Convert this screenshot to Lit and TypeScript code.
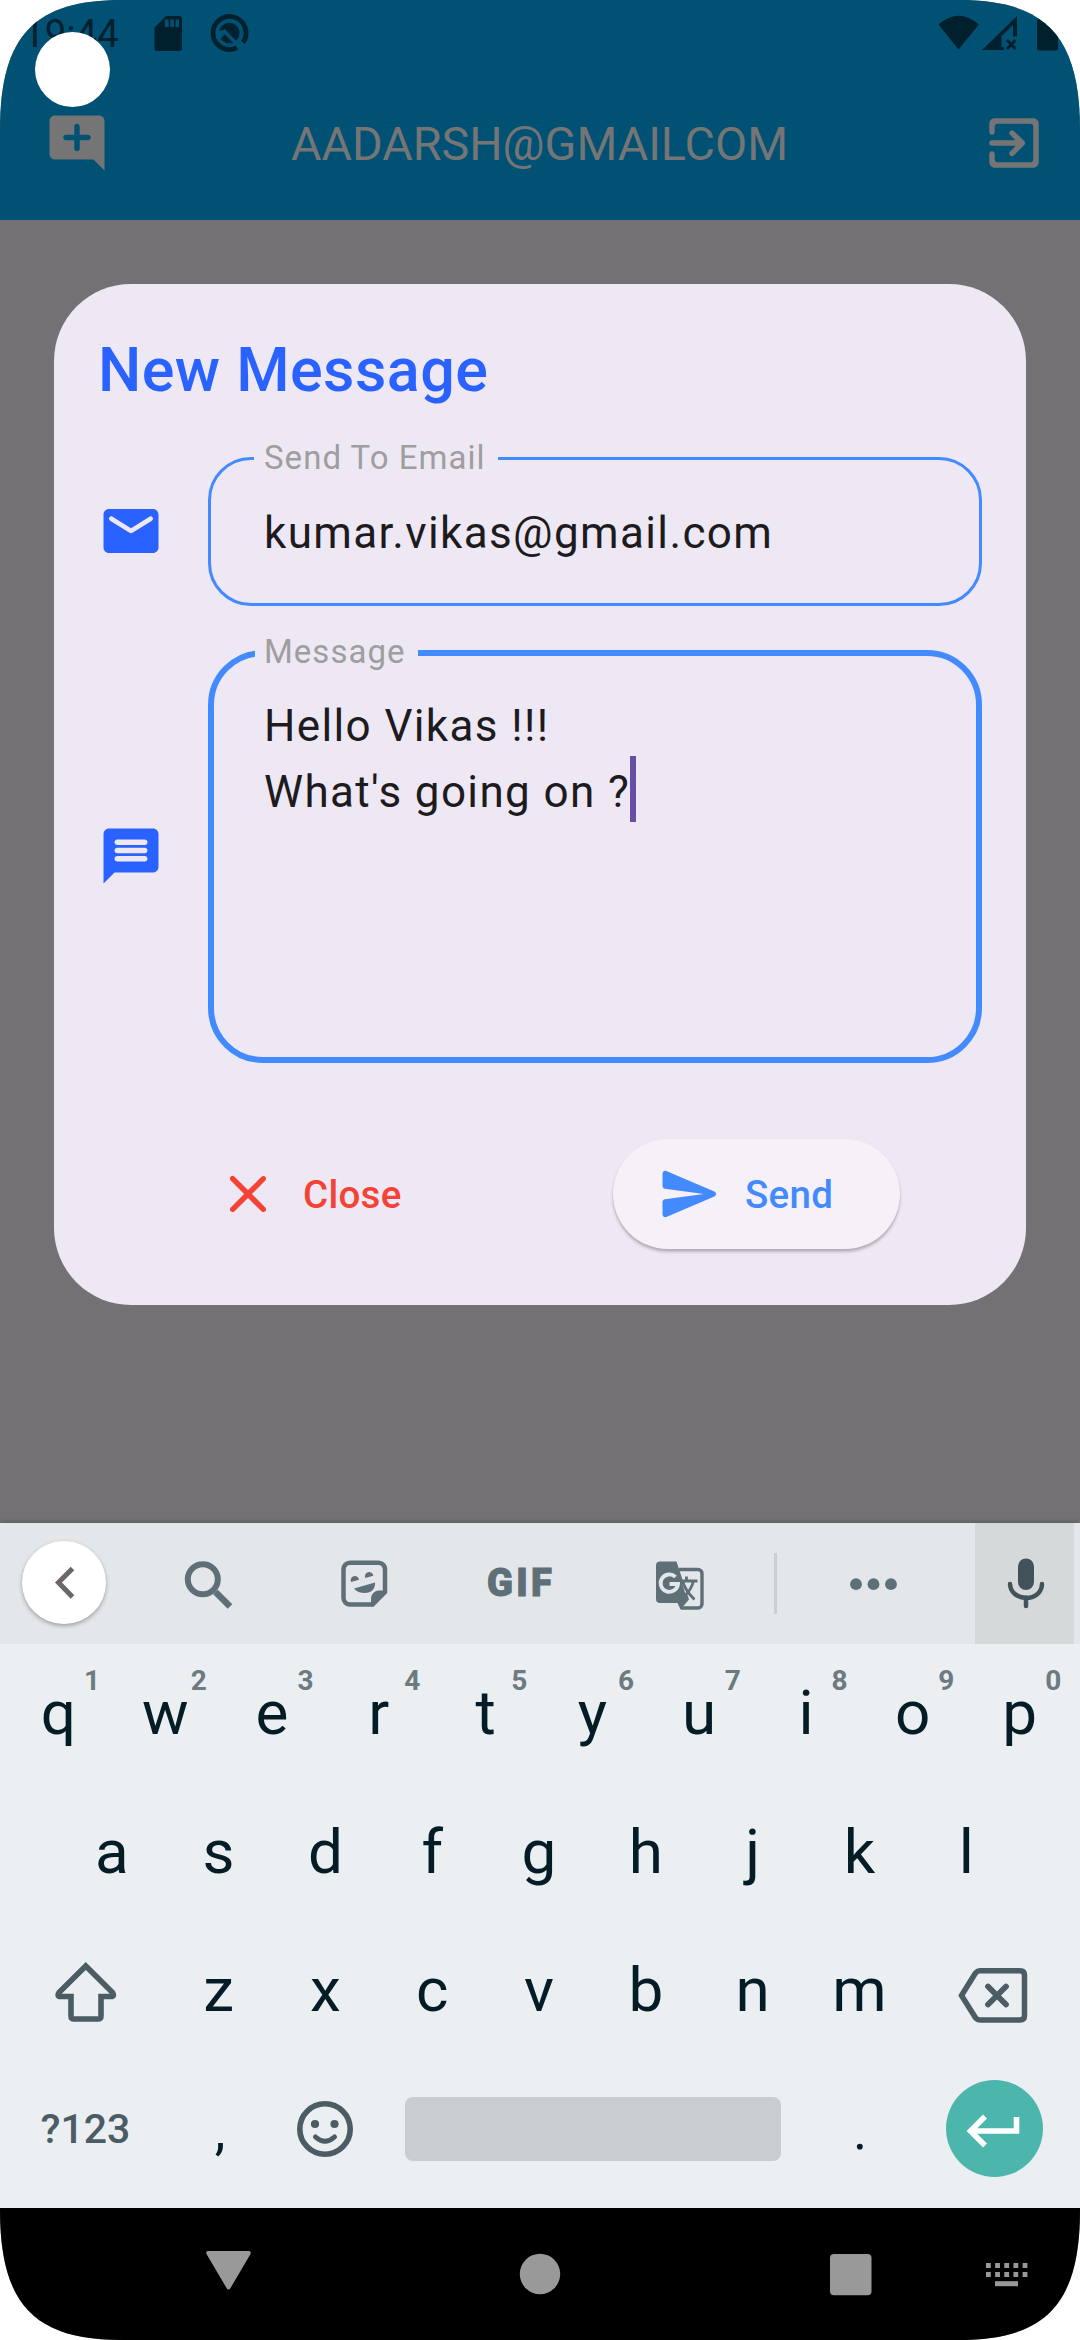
import { LitElement, html, css, svg } from "lit";
import { customElement } from "lit/decorators.js";

@customElement("status-bar")
class StatusBar extends LitElement {
  static styles = css`
    :host { display: flex; height: 66px; padding: 0 10px 0 23px; box-sizing: border-box; color: #00202e; font: 400 38.500px/68px Roboto, sans-serif; }
    .time { width: 131px; white-space: nowrap; }
    .left { flex: 1; }
    svg { display: block; fill: currentColor; }
  `;
  render() {
    return html`
      <span class="time">19:44</span>
      <svg class="left" width="110" height="66" viewBox="154 0 784 66" preserveAspectRatio="xMinYMin meet">
        <path fill-rule="evenodd" d="M166 16H179a3 3 0 0 1 3 3V48a3 3 0 0 1-3 3H157.500a3 3 0 0 1-3-3V27.500ZM165 19.500V27h3.600V19.500ZM170.300 19.500V27h3.600V19.500ZM175.600 19.500V27h3.400V19.500Z" />
        <path fill="none" stroke="currentColor" stroke-width="4.800" d="M237 47.700A16.500 16.500 0 1 1 243 42.500" />
        <circle cx="229.300" cy="33" r="10.300" />
        <path fill="none" stroke="#005174" stroke-width="3.600" d="M218 39L224.500 31.500L241 48.500" />
        <path fill="#005174" d="M216 38L219 31L224 30L219 42Z" />
      </svg>
      <svg width="132" height="66" viewBox="938 0 132 66">
        <path d="M938.500 24.500Q958.500 7 979 24.500L958.500 49.500Z" />
        <path fill-rule="evenodd" d="M982 50L1017 16V36.500H1013V25L1001.500 36V47H1004V50Z" />
        <path fill="none" stroke="currentColor" stroke-width="2.800" d="M1007 40L1015.500 49M1015.500 40L1007 49" />
        <rect x="1037" y="19" width="21" height="31.500" rx="2.500" />
      </svg>
    `;
  }
}

@customElement("app-bar")
class AppBar extends LitElement {
  static styles = css`
    :host { display: grid; grid-template-columns: 66px 1fr 66px; align-items: start; height: 154px; box-sizing: border-box; padding: 44px 33px 0 44px; color: #757575; }
    svg { width: 66px; height: 66px; fill: currentColor; display: block; }
    h1 { margin: 0; font: 400 46.750px/68px Roboto, sans-serif; text-align: center; padding-right: 12px; }
  `;
  render() {
    return html`
      <svg viewBox="0 0 24 24"><path d="M22 4c0-1.100-.9-2-2-2H4c-1.100 0-2 .9-2 2v12c0 1.100.9 2 2 2h14l4 4V4zm-6 7h-3v3c0 .55-.45 1-1 1s-1-.45-1-1v-3H8c-.55 0-1-.45-1-1s.45-1 1-1h3V6c0-.55.45-1 1-1s1 .45 1 1v3h3c.55 0 1 .45 1 1s-.45 1-1 1z" /></svg>
      <h1>AADARSH@GMAILCOM</h1>
      <svg viewBox="0 0 24 24"><path d="M19 3H5c-1.110 0-2 .9-2 2v3c0 .55.45 1 1 1s1-.45 1-1V6c0-.55.45-1 1-1h12c.55 0 1 .45 1 1v12c0 .55-.45 1-1 1H6c-.55 0-1-.45-1-1v-2c0-.55-.45-1-1-1s-1 .45-1 1v3c0 1.100.9 2 2 2h14c1.100 0 2-.9 2-2V5c0-1.100-.9-2-2-2z" /><path d="M4 12H13.500M11.300 8.400L15 12L11.300 15.800" fill="none" stroke="currentColor" stroke-width="2" stroke-linecap="round" stroke-linejoin="round" /></svg>
    `;
  }
}

@customElement("message-dialog")
class MessageDialog extends LitElement {
  static styles = css`
    :host { display: block; width: 972px; height: 1020.500px; box-sizing: border-box; margin: 64px 0 0 54px; padding: 48px 44px 0; border-radius: 77px; background: #eee8f4; font-family: Roboto, sans-serif; color: #1d1b20; }
    h2 { margin: 0; font-weight: 500; font-size: 61px; letter-spacing: .45px; line-height: 77px; height: 76px; color: #2962ff; white-space: nowrap; }
    .row { display: flex; gap: 44px; align-items: center; }
    .email { margin-top: 30px; height: 168px; }
    .message { margin-top: 27px; height: 430px; }
    .row > svg { width: 66px; height: 66px; margin-top: 18px; fill: #2962ff; flex: none; }
    .message > svg { margin-top: 16px; }
    fieldset { width: 774px; height: 100%; flex: none; box-sizing: border-box; margin: 0; border: 3px solid #448aff; border-radius: 43px; padding: 21px 0 0 53px; min-width: 0; }
    legend { height: 41px; line-height: 39px; margin-left: -10px; padding: 0 12px 0 10px; font-size: 33px; letter-spacing: 1.030px; color: #9e9e9e; }
    .message fieldset { border-width: 6px; border-radius: 55px; padding: 20px 0 0 50px; }
    .message legend { height: 40px; line-height: 38px; margin-left: -9px; padding-left: 9px; }
    .text { display: flex; height: 66px; font-size: 44px; line-height: 66px; letter-spacing: 1.375px; white-space: pre; }
    .caret { width: 5.500px; height: 66px; margin-top: -3px; background: #6750a4; }
    .actions { display: flex; margin: 76px 82px 0 117px; height: 110px; justify-content: space-between; align-items: center; font-weight: 500; font-size: 38.500px; letter-spacing: .275px; }
    .close, .send { display: flex; align-items: center; gap: 22px; height: 110px; }
    .close { color: #f44336; }
    .send { width: 287px; box-sizing: border-box; padding-left: 44px; border-radius: 55px; color: #448aff; background: #f6f1f9; box-shadow: 0 3px 3px rgba(0,0,0,.22), 0 1px 3px rgba(0,0,0,.06); }
    .actions svg { width: 66px; height: 66px; fill: currentColor; }
  `;
  render() {
    return html`
      <h2>New Message</h2>
      <div class="row email">
        <svg viewBox="0 0 24 24"><path d="M20 4H4c-1.100 0-2 .9-2 2v12c0 1.100.9 2 2 2h16c1.100 0 2-.9 2-2V6c0-1.100-.9-2-2-2zm-.4 4.250l-7.070 4.420c-.32.2-.74.2-1.060 0L4.400 8.250c-.25-.16-.4-.43-.4-.72 0-.67.73-1.070 1.300-.72L12 11l6.700-4.190c.57-.35 1.300.05 1.300.72 0 .29-.15.56-.4.72z" /></svg>
        <fieldset><legend>Send To Email</legend><div class="text">kumar.vikas@gmail.com</div></fieldset>
      </div>
      <div class="row message">
        <svg viewBox="0 0 24 24"><path d="M20 2H4c-1.100 0-1.990.9-1.990 2L2 22l4-4h14c1.100 0 2-.9 2-2V4c0-1.100-.9-2-2-2zM7 6h10c.55 0 1 .45 1 1s-.45 1-1 1H7c-.55 0-1-.45-1-1s.45-1 1-1zm0 3h10c.55 0 1 .45 1 1s-.45 1-1 1H7c-.55 0-1-.45-1-1s.45-1 1-1zm0 3h10c.55 0 1 .45 1 1s-.45 1-1 1H7c-.55 0-1-.45-1-1s.45-1 1-1z" /></svg>
        <fieldset><legend>Message</legend><div class="text">Hello Vikas !!!</div><div class="text">What's going on ?<span class="caret"></span></div></fieldset>
      </div>
      <div class="actions">
        <div class="close"><svg viewBox="0 0 24 24"><path d="M18.300 5.710c-.39-.39-1.020-.39-1.410 0L12 10.590 7.110 5.700c-.39-.39-1.020-.39-1.410 0s-.39 1.020 0 1.410L10.590 12 5.700 16.890c-.39.39-.39 1.020 0 1.410s1.020.39 1.410 0L12 13.410l4.890 4.890c.39.39 1.020.39 1.410 0s.39-1.020 0-1.410L13.410 12l4.890-4.890c.38-.38.38-1.020 0-1.400z" /></svg>Close</div>
        <div class="send"><svg viewBox="0 0 24 24"><path d="M3.400 20.400l17.450-7.480c.81-.35.81-1.490 0-1.840L3.400 3.600c-.66-.29-1.390.2-1.390.91L2 9.120c0 .5.37.93.87.99L17 12 2.870 13.880c-.5.07-.87.5-.87 1l.01 4.610c0 .71.73 1.200 1.390.91z" /></svg>Send</div>
      </div>
    `;
  }
}

@customElement("soft-keyboard")
class SoftKeyboard extends LitElement {
  static styles = css`
    :host { display: block; height: 685px; background: #ebeff2; font-family: Roboto, sans-serif; color: #041c26; box-shadow: 0 -1px 5px rgba(0,0,0,.22); }
    .tools { display: flex; align-items: center; height: 121px; background: #e3e7ea; color: #5f6f77; }
    svg { display: block; flex: none; }
    .back { flex: none; width: 83.500px; height: 83.500px; margin: 0 69.500px 2px 22px; border-radius: 50%; background: #fff; box-shadow: 0 2px 4px rgba(0,0,0,.3); }
    .tool { width: 66px; height: 66px; }
    .sticker { margin-left: 90px; }
    .gif { flex: none; width: 66px; margin: 0 0 2px 90px; font: 900 38px/60px Roboto, sans-serif; letter-spacing: 3.300px; -webkit-text-stroke: 1px currentColor; }
    .translate { margin-left: 98px; }
    .divider { width: 3px; height: 61px; margin-left: 57px; background: #cbcfd2; }
    .more { margin-left: 63px; }
    .mic { flex: none; display: flex; align-items: center; justify-content: center; width: 99px; height: 121px; margin-left: 69px; padding-left: 3px; box-sizing: border-box; background: #d5d9da; color: #42525a; }
    .keys { display: flex; justify-content: center; height: 138.500px; box-sizing: border-box; align-items: stretch; padding-right: 2px; }
    .key { position: relative; width: 106.800px; font-size: 62px; line-height: 137px; text-align: center; }
    .hint { position: absolute; left: 74px; top: 20px; width: 26px; font-size: 28px; line-height: 34px; font-weight: 700; color: #6d7a80; }
    .dark { color: #4b5c65; }
    .side { display: flex; align-items: center; justify-content: center; width: 160.500px; }
    .bottom { display: flex; align-items: center; height: 138.500px; }
    .symbols { width: 171px; font-weight: 500; font-size: 41px; text-align: center; line-height: 62px; }
    .mark { width: 98px; height: 138px; text-align: center; font-size: 54px; line-height: 140px; }
    .mark span { position: relative; top: 1px; }
    .emoji { margin-left: 26px; }
    .space { width: 376px; height: 64px; margin-left: 50px; border-radius: 8px; background: #c9cdd0; }
    .period { margin-left: 30px; }
    .enter { width: 97px; height: 97px; margin-left: 37px; border-radius: 50%; background: #4db6ac; }
  `;
  private row(letters: string, hints = "") {
    return [...letters].map((c, i) => html`<div class="key">${c}${hints ? html`<span class="hint">${hints[i]}</span>` : ""}</div>`);
  }
  render() {
    return html`
      <div class="tools">
        <div class="back"><svg viewBox="0 0 83.500 83.500"><path d="M50.500 27.500L36.500 41.500L50.500 56" fill="none" stroke="#6b6766" stroke-width="5" /></svg></div>
        <svg class="tool" viewBox="175 1550.500 66 66"><g fill="none" stroke="currentColor"><circle cx="202.800" cy="1578.700" r="15" stroke-width="6" /><path d="M215.500 1591.500L230 1606" stroke-width="6.500" /></g></svg>
        <svg class="tool sticker" viewBox="331 1550.500 66 66"><path d="M350 1562.200H378.500a6.500 6.500 0 0 1 6.500 6.500V1591.500L372.500 1604H350a6.500 6.500 0 0 1-6.500-6.500V1568.700a6.500 6.500 0 0 1 6.500-6.500Z" fill="none" stroke="currentColor" stroke-width="4.500" /><g fill="currentColor"><path d="M371 1606V1597.500a8 8 0 0 1 8-7.500H387V1591L373.500 1606Z" /><path d="M354 1588L375 1582c.5 6.500-4 10.500-10 10.500-5 0-8.500-1.500-11-4.500Z" /><path d="M351 1581.500a4.200 4.200 0 1 1 8-2.200ZM365.300 1577.500a4.200 4.200 0 1 1 8-2.200Z" /></g></svg>
        <div class="gif">GIF</div>
        <svg class="tool translate" viewBox="651 1550.500 66 66">
          <path d="M679 1569H698a4 4 0 0 1 4 4V1603.500a4 4 0 0 1-4 4H681" fill="none" stroke="currentColor" stroke-width="3.400" />
          <path d="M660 1561H676.500L689 1599L680.500 1609L677.500 1602.500H660a4 4 0 0 1-4-4V1565a4 4 0 0 1 4-4Z" fill="currentColor" />
          <path d="M682 1582.500H691L687.500 1591L685.500 1594Z" fill="#e3e7ea" />
          <path d="M675.500 1576.500A8.700 8.700 0 1 0 678 1583.500H669.500" fill="none" stroke="#e3e7ea" stroke-width="3.800" />
          <path d="M681 1580.500H697.500M686.500 1576V1580.500M693.500 1580.500Q691 1590 684.500 1595M683 1582Q686 1591 694.500 1599" fill="none" stroke="currentColor" stroke-width="2.800" />
        </svg>
        <div class="divider"></div>
        <svg class="tool more" viewBox="840 1550.500 66 66" fill="currentColor"><circle cx="856" cy="1583.700" r="5.900" /><circle cx="873.500" cy="1583.700" r="5.900" /><circle cx="891" cy="1583.700" r="5.900" /></svg>
        <div class="mic"><svg class="tool" viewBox="993 1550.500 66 66"><rect x="1018" y="1558" width="16" height="31.500" rx="8" fill="currentColor" /><path d="M1010 1583.500C1011 1602 1041.500 1602 1042 1583.500M1026 1597V1605.500" fill="none" stroke="currentColor" stroke-width="4.500" stroke-linecap="round" /></svg></div>
      </div>
      <div class="keys">${this.row("qwertyuiop", "1234567890")}</div>
      <div class="keys">${this.row("asdfghjkl")}</div>
      <div class="keys">
        <div class="side dark"><svg width="80" height="80" viewBox="45 1951 80 80"><path d="M85.800 1967L112.500 1993.500q2.500 4-1.500 4H101V2017q0 3-3 3H74q-3 0-3-3V1997.500H60.500q-4 0-1.500-4Z" fill="none" stroke="currentColor" stroke-width="5.600" /></svg></div>
        ${this.row("zxcvbnm")}
        <div class="side dark"><svg width="80" height="80" viewBox="953 1951 80 80"><path d="M961.500 1996.500L975.500 1974q2-2.200 4.500-2.200H1020q4.500 0 4.500 4.500V2016.500q0 4.500-4.500 4.500H980q-2.500 0-4.500-2.200Z" fill="none" stroke="currentColor" stroke-width="5.500" /><path d="M988 1987.500L1006 2005.500M1006 1987.500L988 2005.500" stroke="currentColor" stroke-width="5.800" stroke-linecap="round" /></svg></div>
      </div>
      <div class="bottom">
        <div class="symbols dark">?123</div>
        <div class="mark"><span>,</span></div>
        <svg class="dark emoji" width="60" height="60" viewBox="295 2099 60 60"><circle cx="325" cy="2129" r="25.200" fill="none" stroke="currentColor" stroke-width="5.600" /><circle cx="315" cy="2124" r="4.100" fill="currentColor" /><circle cx="334.500" cy="2124" r="4.100" fill="currentColor" /><path d="M315.500 2137Q325 2145.500 334.500 2137" fill="none" stroke="currentColor" stroke-width="5" stroke-linecap="round" /></svg>
        <div class="space"></div>
        <div class="mark period"><span>.</span></div>
        <div class="enter"><svg viewBox="0 0 97 97"><path d="M39 36.500L24.500 51L39 65.500M25 51H70.500V37" fill="none" stroke="#fff" stroke-width="5.600" /></svg></div>
      </div>
    `;
  }
}

@customElement("nav-bar")
class NavBar extends LitElement {
  static styles = css`
    :host { display: flex; align-items: flex-start; height: 132px; background: #000; }
    svg { display: block; fill: #999; }
  `;
  render() {
    const dots = [0, 1].flatMap((r) => [0, 1, 2, 3, 4].map((c) => svg`<rect x=${986 + c * 9.15} y=${55 + r * 9} width="4.800" height="5" />`));
    return html`
      <svg width="1080" height="132" viewBox="0 0 1080 132">
        <path d="M208 43H249q2.500 0 1.500 3L230.500 80q-2 3-4 0L206.500 46q-1-3 1.500-3Z" />
        <circle cx="540" cy="66" r="20.200" />
        <rect x="830" y="46" width="41.500" height="41.300" rx="4" />
        ${dots}
        <rect x="995" y="73.200" width="23" height="5" />
      </svg>
    `;
  }
}

@customElement("app-root")
class AppRoot extends LitElement {
  static styles = css`
    :host { display: block; background: #fff; }
    .screen { position: relative; display: flex; flex-direction: column; width: 1080px; height: 2340px; background: #747174; clip-path: path("M0 130C0 34 36 0 122 0H958C1044 0 1080 34 1080 130V2210C1080 2306 1044 2340 958 2340H122C36 2340 0 2306 0 2210Z"); }
    .header { background: #005174; height: 220px; }
    .camera { position: absolute; left: 35px; top: 32px; width: 75px; height: 75px; border-radius: 50%; background: #fff; }
    .body { flex: 1; }
  `;
  render() {
    return html`
      <div class="screen">
        <div class="header"><status-bar></status-bar><app-bar></app-bar></div>
        <div class="body"><message-dialog></message-dialog></div>
        <soft-keyboard></soft-keyboard>
        <nav-bar></nav-bar>
        <div class="camera"></div>
      </div>
    `;
  }
}
